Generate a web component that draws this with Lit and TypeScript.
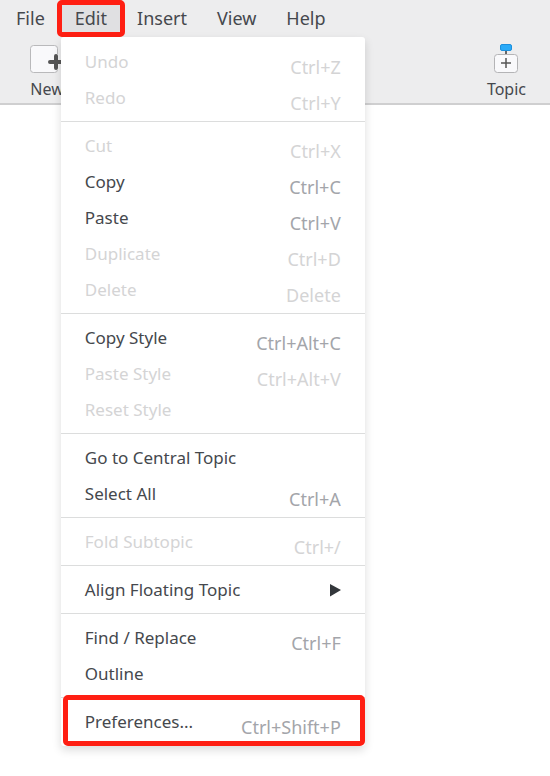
import { LitElement, html, css, svg, nothing } from "lit";
import { customElement, state } from "lit/decorators.js";
import { classMap } from "lit/directives/class-map.js";

interface Entry {
  label: string;
  keys?: string;
  off?: boolean;
  submenu?: boolean;
  marked?: boolean;
}

const GROUPS: Entry[][] = [
  [
    { label: "Undo", keys: "Ctrl+Z", off: true },
    { label: "Redo", keys: "Ctrl+Y", off: true },
  ],
  [
    { label: "Cut", keys: "Ctrl+X", off: true },
    { label: "Copy", keys: "Ctrl+C" },
    { label: "Paste", keys: "Ctrl+V" },
    { label: "Duplicate", keys: "Ctrl+D", off: true },
    { label: "Delete", keys: "Delete", off: true },
  ],
  [
    { label: "Copy Style", keys: "Ctrl+Alt+C" },
    { label: "Paste Style", keys: "Ctrl+Alt+V", off: true },
    { label: "Reset Style", off: true },
  ],
  [{ label: "Go to Central Topic" }, { label: "Select All", keys: "Ctrl+A" }],
  [{ label: "Fold Subtopic", keys: "Ctrl+/", off: true }],
  [{ label: "Align Floating Topic", submenu: true }],
  [{ label: "Find / Replace", keys: "Ctrl+F" }, { label: "Outline" }],
  [{ label: "Preferences...", keys: "Ctrl+Shift+P", marked: true }],
];

@customElement("edit-menu")
export class EditMenu extends LitElement {
  static styles = css`
    :host {
      display: block;
      width: 304px;
      padding-top: 1px;
      background: #fff;
      border-radius: 3px;
      box-shadow: 0 4px 10px rgba(0, 0, 0, 0.14);
    }
    .group {
      padding: 6px 0 5px;
      border-bottom: 1px solid #dcdddd;
    }
    .group:last-child {
      border-bottom-color: transparent;
    }
    .item {
      position: relative;
      display: flex;
      align-items: center;
      justify-content: space-between;
      width: 100%;
      height: 36px;
      padding: 0 24px;
      border: 0;
      background: none;
      font: 17px/24px "Noto Sans", sans-serif;
      color: #45484d;
      text-align: left;
      white-space: nowrap;
    }
    .keys {
      padding-top: 10px;
      font-size: 18px;
      color: #a3a5aa;
    }
    .item:disabled,
    .item:disabled .keys {
      color: #d4d4d5;
    }
    .arrow {
      width: 11px;
      height: 14px;
      fill: #33373b;
    }
    .marked::after {
      content: "";
      position: absolute;
      inset: -9px 0 -6px 2px;
      border: 5px solid #ff1f13;
      border-radius: 5px;
    }
  `;

  render() {
    return GROUPS.map(
      (group) => html`<div class="group" role="group">
        ${group.map(
          (e) => html`<button
            class=${classMap({ item: true, marked: !!e.marked })}
            role="menuitem"
            ?disabled=${e.off}
          >
            <span>${e.label}</span>
            ${e.keys ? html`<span class="keys">${e.keys}</span>` : nothing}
            ${e.submenu
              ? html`<svg class="arrow" viewBox="0 0 11 14" aria-hidden="true">
                  ${svg`<path d="M0 1 11 7 0 13.5z" />`}
                </svg>`
              : nothing}
          </button>`,
        )}
      </div>`,
    );
  }
}

@customElement("app-root")
export class AppRoot extends LitElement {
  @state() private open = "Edit";

  static styles = css`
    :host {
      display: block;
      min-height: 100vh;
      background: #fff;
      font: 18px/24px "Noto Sans", sans-serif;
      color: #45484d;
    }
    .head {
      background: #ededee;
      border-bottom: 2px solid #cfcfd0;
    }
    .menubar {
      display: flex;
      height: 37px;
      padding: 0 1px;
    }
    .entry {
      position: relative;
    }
    .title {
      height: 37px;
      padding: 0 15px 2px;
      border: 0;
      background: none;
      font: inherit;
      color: inherit;
    }
    .open .title {
      background: #e0e0e2;
    }
    .open::after {
      content: "";
      position: absolute;
      inset: 0 -3px;
      border: 5px solid #ff1f13;
      border-radius: 5px;
    }
    .drop {
      position: absolute;
      z-index: 1;
      top: 37px;
      left: 1px;
    }
    .toolbar {
      display: flex;
      justify-content: space-between;
      padding: 5px 24px 3px 29px;
    }
    .tool {
      display: flex;
      flex-direction: column;
      align-items: center;
      gap: 2px;
      padding: 0;
      border: 0;
      background: none;
      font: 16px/22px "Noto Sans", sans-serif;
      color: inherit;
    }
    .icon {
      width: 36px;
      height: 34px;
    }
  `;

  private toggle(name: string) {
    this.open = this.open === name ? "" : name;
  }

  render() {
    return html`
      <header class="head">
        <nav class="menubar" aria-label="Main menu">
          ${["File", "Edit", "Insert", "View", "Help"].map(
            (name) => html`<div
              class=${classMap({ entry: true, open: this.open === name })}
            >
              <button class="title" @click=${() => this.toggle(name)}>
                ${name}
              </button>
              ${name === "Edit" && this.open === name
                ? html`<edit-menu class="drop" role="menu"></edit-menu>`
                : nothing}
            </div>`,
          )}
        </nav>
        <div class="toolbar">
          <button class="tool">
            <svg class="icon" viewBox="0 0 36 34" aria-hidden="true">
              <rect x="1.5" y="3.5" width="27" height="27" rx="3" fill="#f9f9fb" stroke="#b9b9bb" />
              <path d="M27 12h3v16h-3z" fill="#f1f1f2" />
              <path d="M21 20h12M27 14v12" stroke="#555" stroke-width="4" stroke-linecap="round" />
            </svg>
            <span>New</span>
          </button>
          <button class="tool">
            <svg class="icon" viewBox="0 0 36 34" aria-hidden="true">
              <path d="M18 8v5" stroke="#666" stroke-width="2" />
              <rect x="12.5" y="2.5" width="11" height="6" rx="1.5" fill="#29aaf8" stroke="#1c8fdc" />
              <rect x="6.500" y="12.5" width="23" height="18" rx="3" fill="#f9f9fb" stroke="#b4b4b6" />
              <path d="M13 21h10M18 16v10" stroke="#555" stroke-width="1.5" />
            </svg>
            <span>Topic</span>
          </button>
        </div>
      </header>
    `;
  }
}
